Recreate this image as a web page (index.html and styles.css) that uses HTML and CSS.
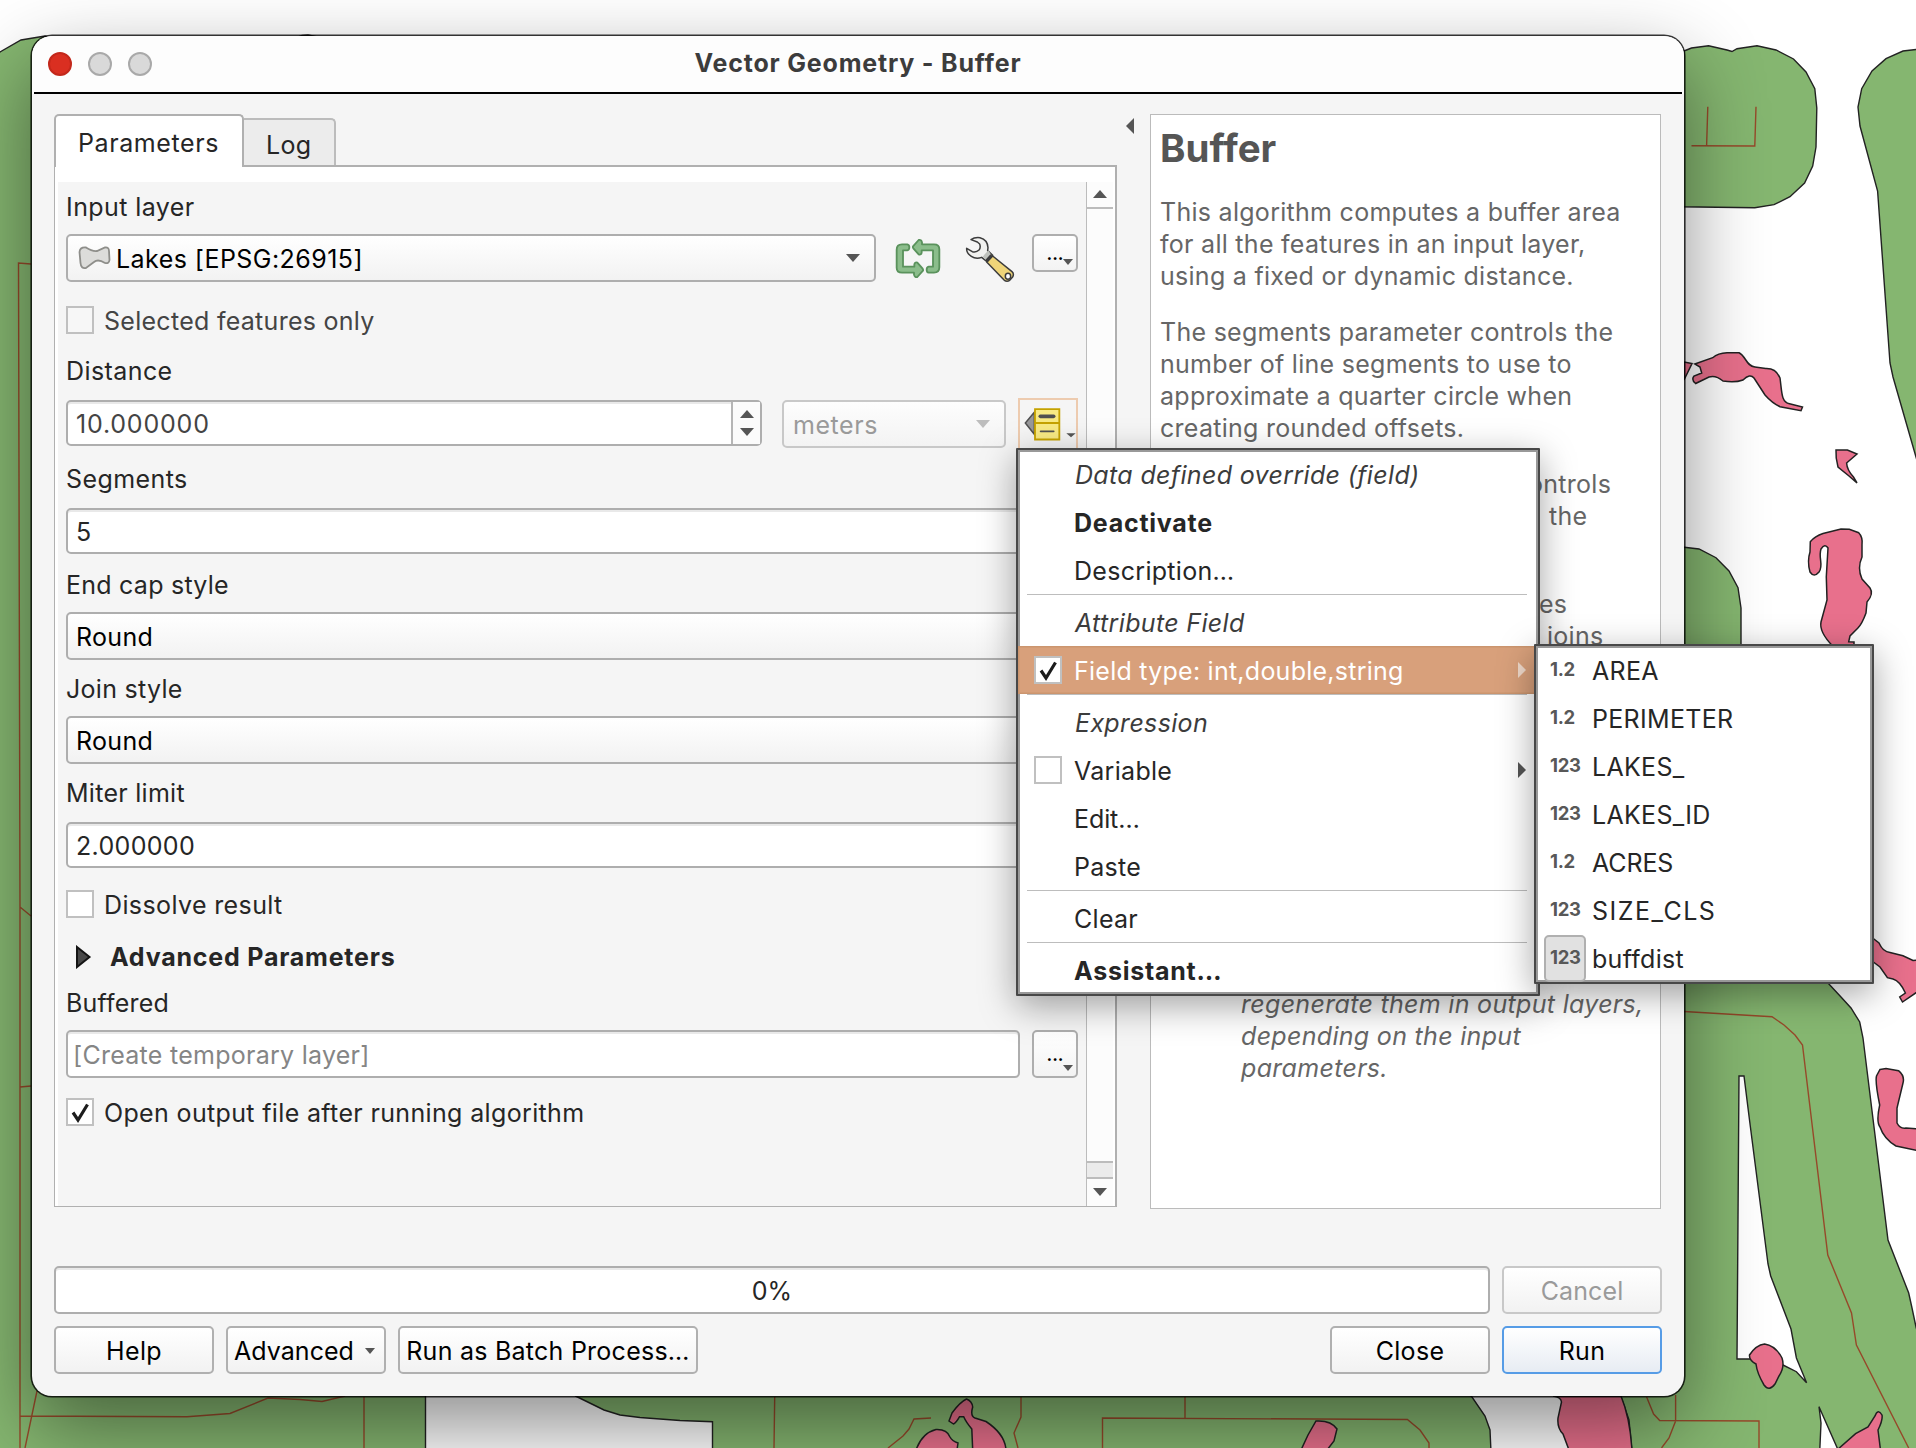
FILE: index.html
```html
<!DOCTYPE html>
<html lang="en">
<head>
<meta charset="utf-8">
<title>Vector Geometry - Buffer</title>
<link rel="stylesheet" href="styles.css">
</head>
<body>
<div class="desktop">
  <svg class="map" viewBox="0 0 1916 1448" width="1916" height="1448">
    <g class="zone">
      <path d="M-4 55 L0 52 L21 40 L45 36 L60 40 L290 40 L302 35.500 L308 35 L313 36 L425.500 60 V1452 H-4Z"/>
      <path d="M575.500 1396 L604 1410 L620 1415 L640 1417.500 L680 1420.500 L712.500 1421.700 V1452 H1491 L1490 1430 L1485 1416 L1472 1397 L1400 1340 H575Z"/>
      <path d="M1684 51 L1691.500 48 L1708.600 45.700 L1727 50 L1732 51.500 L1737 48.700 L1757 45.700 L1776 50 L1793.500 59 L1806 72 L1814.800 88.700 L1816.800 108 L1816 147 L1812.700 166 L1804.600 183 L1790 196.700 L1774 204.700 L1754.800 207.700 L1680 206.700Z"/>
      <path d="M1920 49 L1903 51 L1886 58.700 L1872 71 L1861.700 88.700 L1858 107 L1860 126 L1877.600 191 L1890 363 L1893 377 L1916 457 L1920 470Z"/>
      <path d="M1680 546.700 L1699 549 L1716 557.700 L1729 571 L1738 587.700 L1741 608 V960 L1800 962 L1828 983 L1841 997 L1851 1008 L1859.700 1022 L1863 1038 L1888 1240 L1908.700 1293 L1912 1308 L1916 1327 L1920 1340 V1452 H1839 L1819 1406.700 L1821 1423 L1819.700 1452 H1632 L1629 1420 L1621 1397 L1600 1340Z"/>
    </g>
    <path class="gap" d="M1739 1076 H1744 L1749.500 1120 L1768 1264 L1770.700 1276 L1791 1329 L1796.400 1358 L1806.600 1382.700 L1796.400 1371.700 L1783 1365 L1770 1359 H1737Z"/>
    <g class="road">
      <path d="M31 264 L18.500 263 L20 907 V1452 M20 907 L31 916 M20 1087 L31 1086 M37 1391 L25 1448 M20 1416 L187 1416.700 L230 1413.500 L268 1398 L300 1399.500 L322 1401.500 L345 1396 M364 1397 V1448"/>
      <path d="M774.700 1397 L774 1448 M888 1448 L903 1436 L909 1429 L914 1419 L931 1418 M1021 1397 V1417 L1014 1433 L1018 1448 M1102.500 1448 V1418 L1407.400 1419.500 L1420 1430 L1429 1443 V1448 M1185 1397 V1419"/>
      <path d="M1646.600 1397 L1653.600 1414 L1659.700 1420.500 L1759 1421 V1448 M1675.600 1395 V1421 L1669 1438 L1661.500 1448"/>
      <path d="M1684 1011.500 L1772 1016.700 L1784 1025 L1795 1035 L1802.500 1045 L1827.800 1255 L1851.500 1313 L1856.400 1345 L1908.700 1448"/>
      <path d="M1707.800 106.700 L1706.600 146 M1691.500 145.700 L1754.800 146 L1756 106.700"/>
    </g>
    <g class="lake">
      <path d="M1684 362 L1692 363.500 L1684 380Z"/>
      <path d="M1694.800 364 L1712.700 357.700 Q1718 353 1727 352.700 L1739 352.700 C1746 356 1746 366 1755 367 L1765.800 368.500 Q1776 368 1780 378 C1782 392 1781 402 1789.500 403.700 L1802.500 407 L1801 410.700 L1780 406.700 Q1772 403 1765 395 L1754 378 Q1750 373 1743 380 Q1735 383 1723 381 Q1716 375 1709 377 L1695.600 383.500 Q1691 380 1694 376 L1701.700 373 L1700 367Z"/>
      <path d="M1836 450 L1847.400 450 L1857 454 L1846.600 463 Q1847 470 1853.500 477 L1857 483 L1849 476 L1838 467 Q1835.500 458 1836 450Z"/>
      <path d="M1810.300 541.700 Q1815 536 1823 533.500 L1841 529 L1849.300 529.300 L1858.700 532.700 Q1863 537 1862 545 L1862 557 Q1857 568 1862 579 L1870 588 Q1874 594 1867 602 L1866 613 Q1862 624 1857.700 628.300 L1850 636 L1848.700 641.700 L1854 642 V646 H1832.700 Q1819 632 1821 622 L1827 600 L1826.300 576.700 L1828 548 Q1825 543 1821 549 C1818 558 1824 565 1819 572 Q1814 578 1810 572 Q1807 561 1810 552Z"/>
      <path d="M1870 936 L1879 943 Q1883 952 1890 952.500 L1903 955.700 L1913 960.500 L1920 960 V990 L1902.500 1002 L1899.700 997 L1905.400 993 Q1900 981 1893 979 L1887.400 977.700 L1880 967 L1868 958Z"/>
      <path d="M1880 1069.500 L1886 1068.500 L1898.500 1070.700 Q1905 1076 1903 1083 L1897 1108 V1123 Q1900 1129 1906 1128 L1920 1129 V1151 L1896 1146 Q1884 1139 1880 1127 Q1876 1122 1879.700 1105 Q1875 1082 1876.500 1076Z"/>
      <path d="M1749.500 1355 Q1756 1345 1764.600 1344 Q1776 1346 1782 1358 Q1785 1367 1779 1376 L1775 1384 Q1769 1392 1764 1385 Q1757 1373 1756 1364 Q1749 1360 1749.500 1355Z"/>
      <path d="M1837 1450 L1855.600 1433.700 L1868 1427 L1875 1416 Q1878 1408 1882 1415 Q1883 1420 1878 1430 L1880.500 1450Z"/>
      <path d="M1553 1396 Q1561 1397 1561.500 1402 L1558 1418 Q1557 1428 1563 1434 L1569 1450 H1632 Q1630 1418 1621 1396Z"/>
      <path d="M916 1450 Q922 1433 936 1429.500 Q947 1429 950 1437 Q952 1441 958 1443 L957 1450Z"/>
      <path d="M949 1421 L952 1413 Q960 1402 966.500 1399 Q972 1401 972.700 1407 Q970 1416 975 1418 L986 1421.500 Q1005 1434 1006 1450 H972.700 L971.800 1429 Q966 1422 963.700 1416.700 L959.600 1416.700 Q956 1423 953.500 1424Z"/>
      <path d="M1301 1450 L1308 1435 L1316 1421 Q1331 1420 1337 1429 L1334 1441 L1327 1450Z"/>
    </g>
  </svg>

  <main class="window">
    <header class="titlebar">
      <div class="lights"><i class="close"></i><i></i><i></i></div>
      <h1>Vector Geometry - Buffer</h1>
    </header>

    <div class="content">
      <section class="left">
        <nav class="tabs"><span class="tab active">Parameters</span><span class="tab">Log</span></nav>
        <div class="panel">
          <form class="form">
            <label class="first">Input layer</label>
            <div class="row layer">
              <div class="combo grow">
                <svg class="poly" width="34" height="26" viewBox="77 244 34 26"><path d="M79.500 251 Q80 246 86 246.500 Q92 250.500 97 250 L105 246.500 Q109 246 109 250 L109.500 259 Q109 263 105 262 Q98 257.500 94 261 L86 267 Q81 268 80.500 262Z" fill="#dcdcda" stroke="#8e8e8a" stroke-width="1.800"/></svg>
                <span>Lakes [EPSG:26915]</span><i class="down"></i>
              </div>
              <svg class="iterate" width="46" height="41" viewBox="45 55 138 123"><g fill="#8bbd8b" stroke="#5a925c" stroke-width="5.500" stroke-linejoin="round"><path id="loop" d="M82 74 H66 Q50 74 50 90 V144 Q50 159 66 159 H102 V165 Q104 174 112 172 L129 153 Q130 150 128 147 L112 129 Q104 126 103 135 V141 H69 V92 H82 Q88 91 88 83 Q88 75 82 74Z"/><use href="#loop" transform="rotate(180 114 116.500)"/></g></svg>
              <svg class="wrench" width="50" height="48" viewBox="255 49 150 144"><g stroke="#3c3c3c" stroke-width="4.500" stroke-linejoin="round"><path d="M273 60 Q284 52 300 54 Q323 60 324 84 L323 93 L338 107 L320 125 L305 113 Q288 119 274 110 Q259 100 260 86 L277 96 Q289 99 297 91 Q303 84 299 73 L292 67Z" fill="#f1f1ef"/><path d="M325 92 L334 106 L318 121 L308 111Z" fill="#bfc2bd" stroke="none"/><path d="M338 109 L396 156 Q403 162 398 172 L389 182 Q381 187 373 182 L320 127Z" fill="#efd579"/><path d="M335 107 L319 125" stroke-width="10"/><ellipse cx="384" cy="170" rx="8" ry="9" fill="#fff"/></g></svg>
              <button type="button" class="more short">...<i class="down small"></i></button>
            </div>
            <div class="check c1 dim"><i class="box off"></i>Selected features only</div>
            <label class="l-dist">Distance</label>
            <div class="row dist">
              <div class="spin grow dim"><span class="wide">10.000000</span><b><i class="up"></i><i class="down"></i></b></div>
              <div class="combo units"><span>meters</span><i class="down"></i></div>
              <div class="override"><svg width="52" height="36" viewBox="432 560 156 108"><path d="M463 576 L436 608 L463 642Z" fill="#98989a" stroke="#505050" stroke-width="4.500"/><path d="M465 566.500 H538 V657.500 H465Z M465 608 H538" fill="#f8ea84" stroke="#c5a200" stroke-width="5.500"/><path d="M481 588 H521" stroke="#505050" stroke-width="11" stroke-linecap="round"/><path d="M482 633 H521" stroke="#505050" stroke-width="5.500" stroke-linecap="round"/><path d="M559 639 H587 L573 651Z" fill="#555"/></svg></div>
            </div>
            <label class="l-seg">Segments</label>
            <div class="spin">5</div>
            <label class="l-cap">End cap style</label>
            <div class="combo">Round</div>
            <label class="l-join">Join style</label>
            <div class="combo">Round</div>
            <label class="l-join">Miter limit</label>
            <div class="spin">2.000000</div>
            <div class="check c2"><i class="box"></i>Dissolve result</div>
            <div class="advanced"><svg width="18" height="24" viewBox="0 0 18 24"><path d="M2 2 L14.500 12 L2 22Z" fill="#484848" stroke="#141414" stroke-width="2"/></svg>Advanced Parameters</div>
            <label class="l-buf">Buffered</label>
            <div class="row out"><div class="field grow">[Create temporary layer]</div><button type="button" class="more">...<i class="down small"></i></button></div>
            <div class="check c3"><i class="box"><svg viewBox="0 0 24 24" width="24" height="24"><path d="M5 12.500 L10 20 L19.500 4.500"/></svg></i>Open output file after running algorithm</div>
          </form>
          <div class="scroll"><b class="sb-up"><i class="up"></i></b><b class="thumb"></b><b class="sb-down"><i class="down"></i></b></div>
        </div>
      </section>
      <div class="fold"><i></i></div>
      <aside class="help">
        <h2>Buffer</h2>
        <p>This algorithm computes a buffer area<br>for all the features in an input layer,<br>using a fixed or dynamic distance.</p>
        <p>The segments parameter controls the<br>number of line segments to use to<br>approximate a quarter circle when<br>creating rounded offsets.</p>
        <p class="caps"><span>ontrols</span><span>the</span></p>
        <p class="joins"><span>es</span><span>joins</span></p>
        <p class="note">regenerate them in output layers,<br>depending on the input<br>parameters.</p>
      </aside>
    </div>

    <div class="row progress"><div class="bar">0%</div><button class="btn off">Cancel</button></div>
    <footer class="row actions">
      <button class="btn">Help</button>
      <button class="btn adv">Advanced<i class="down small"></i></button>
      <button class="btn batch">Run as Batch Process…</button>
      <span class="grow"></span>
      <button class="btn">Close</button>
      <button class="btn run">Run</button>
    </footer>
  </main>

  <div class="menu main">
    <div class="item head">Data defined override (field)</div>
    <div class="item bold">Deactivate</div>
    <div class="item">Description…</div>
    <hr>
    <div class="item head">Attribute Field</div>
    <div class="item on"><i class="box"><svg viewBox="0 0 24 24" width="24" height="24"><path d="M5 12.500 L10 20 L19.500 4.500"/></svg></i>Field type: int,double,string<i class="right"></i></div>
    <hr>
    <div class="item head">Expression</div>
    <div class="item"><i class="box"></i>Variable<i class="right"></i></div>
    <div class="item tight">Edit…</div>
    <div class="item">Paste</div>
    <hr>
    <div class="item">Clear</div>
    <hr>
    <div class="item bold">Assistant…</div>
  </div>

  <div class="menu fields">
    <div class="item"><b>1.2</b>AREA</div>
    <div class="item"><b>1.2</b>PERIMETER</div>
    <div class="item"><b>123</b>LAKES_</div>
    <div class="item"><b>123</b>LAKES_ID</div>
    <div class="item tight"><b>1.2</b>ACRES</div>
    <div class="item loose"><b>123</b>SIZE_CLS</div>
    <div class="item"><b class="picked">123</b>buffdist</div>
  </div>
</div>
</body>
</html>
```
FILE: styles.css
```css
* { box-sizing: border-box; }
body { margin: 0; background: #fff; font: 25px/32px Inter, "Liberation Sans", sans-serif; letter-spacing: .32px; color: #262626; }
i, b { font-style: normal; display: block; flex: none; }
h1, h2, p { margin: 0; }
button { font: inherit; letter-spacing: inherit; color: #000; padding: 0; }

.desktop { position: relative; width: 1916px; height: 1448px; overflow: hidden; }
.map { display: block; }
.zone path { fill: #85b670; stroke: #222; stroke-width: 1.4; }
.gap { fill: #fff; stroke: #222; stroke-width: 1.4; }
.road path { fill: none; stroke: #96492a; stroke-width: 1.4; }
.lake path { fill: #e8708c; stroke: #222; stroke-width: 1.5; }

.window { position: absolute; left: 32px; top: 36px; width: 1652px; height: 1360px; background: #f5f5f5; border-radius: 20px; box-shadow: 0 0 0 1.6px rgba(0,0,0,.78), 0 30px 80px rgba(0,0,0,.46); }
.titlebar { display: grid; grid-template-columns: 1fr auto 1fr; align-items: center; height: 58px; padding: 0 16px 2px; background: linear-gradient(#000, #000) 2px 100% / 1648px 2px no-repeat #fdfdfd; border-radius: 20px 20px 0 0; }
.lights { display: flex; gap: 16px; }
.lights i { width: 24px; height: 24px; border-radius: 50%; background: #d9d9d9; border: 2px solid #a9a9a9; }
.lights .close { background: #da2f21; border-color: #c3281b; }
h1 { font-size: 25px; line-height: 32px; font-weight: 700; letter-spacing: .8px; color: #3c3c3c; padding-bottom: 3px; }

.content { display: flex; height: 1095px; margin: 20px 22px 0; }
.left { width: 1063px; height: 1093px; display: flex; flex-direction: column; }
.tabs { display: flex; align-items: flex-end; height: 51px; }
.tab { width: 92px; height: 47px; padding: 9px 0 0 22px; background: #ececec; border: 2px solid #bcbcbc; border-width: 2px 2px 0 0; border-radius: 0 5px 0 0; }
.tab.active { position: relative; width: 190px; height: 53px; margin-bottom: -2px; padding: 11px 0 0 22px; letter-spacing: .6px; background: #fff; border: 2px solid #b0b0b0; border-bottom: 0; border-radius: 5px 5px 0 0; }
.panel { flex: 1; display: flex; background: #fff; border: 2px solid #b0b0b0; border-left-width: 1px; border-bottom-width: 1px; padding: 15px 2px 0 3px; }
.form { flex: 1; display: flex; flex-direction: column; background: #f5f5f5; padding: 0 8px; }
.form label { display: block; height: 32px; letter-spacing: .42px; }
.form label.first { margin: 9px 0 11px; }
.form label.l-dist { margin: 21px 0 13px; }
.form label.l-seg { margin: 17px 0 13px; }
.form label.l-cap { margin: 15px 0 11px; letter-spacing: .24px; }
.form label.l-join { margin: 13px 0 11px; letter-spacing: .28px; }
.form label.l-join + .spin { margin-top: 2px; }
.form label.l-buf { margin: 15px 0 11px; letter-spacing: .2px; }
.row { display: flex; align-items: flex-start; }
.grow { flex: 1; }
.layer { height: 48px; }
.dist { height: 46px; }
.combo, .spin, .field, .bar { display: flex; align-items: center; border: 2px solid #aeaeae; border-radius: 5px; padding: 1px 0 0 8px; }
.combo { height: 48px; background: linear-gradient(#fff, #f2f2f2); color: #000; }
.layer .combo { letter-spacing: .45px; padding-left: 9px; }
.combo .down { margin: -1px 14px 0 auto; }
.spin { height: 46px; background: #fff; box-shadow: inset 0 2px #e9e9e9; }
.spin b { height: 42px; margin: -1px 0 0 auto; display: flex; flex-direction: column; align-items: center; justify-content: center; gap: 10px; width: 29px; border-left: 2px solid #b5b5b5; background: #fbfbfb; }
.dim { color: #444; letter-spacing: .28px; }
.wide { letter-spacing: .8px; }
.units { width: 224px; margin-left: 20px; padding-left: 9px; border-color: #c8c8c8; background: linear-gradient(#fdfdfd, #f3f3f3); color: #9a9a9a; letter-spacing: .55px; }
.combo.units .down { border-top-color: #bdbdbd; }
.override { width: 60px; height: 56px; margin: -2px 0 0 12px; border: 2px solid #edcbaf; padding: 7px 0 0 4px; line-height: 0; }
.poly { margin: -2px 5px 0 0; }
.iterate { margin: 4px 0 0 19px; }
.wrench { margin: 2px 17px 0 24px; }
.more { position: relative; width: 46px; height: 48px; margin-left: 12px; border: 2px solid #aeaeae; border-radius: 5px; background: linear-gradient(#fff, #f3f3f3); font-size: 18px; line-height: 44px; font-weight: 600; letter-spacing: 0; padding-top: 1px; }
.more.short { height: 38px; margin-left: 0; line-height: 34px; }
.more .small { position: absolute; right: 3px; bottom: 5px; }
.down { width: 0; border: 7.5px solid transparent; border-top: 8px solid #555; border-bottom: 0; }
.up { width: 0; border: 7.5px solid transparent; border-bottom: 8px solid #555; border-top: 0; }
.small { border-width: 6px 5.5px 0; }

.check { display: flex; align-items: center; gap: 10px; height: 28px; padding-top: 1px; }
.c1 { margin-top: 24px; }
.c2 { margin-top: 22px; letter-spacing: .38px; }
.c3 { margin-top: 20px; letter-spacing: .35px; }
.box { width: 28px; height: 28px; border: 2px solid #c0c0c0; background: #fff; }
.check .box { margin-top: -1px; }
.box.off { background: #f7f7f7; }
.box svg { display: block; }
.box path { fill: none; stroke: #1c1c1c; stroke-width: 3.2; }
.advanced { display: flex; align-items: center; gap: 17px; height: 32px; margin-top: 22px; padding: 1px 0 0 9px; font-weight: 700; letter-spacing: .78px; }
.field { height: 48px; padding-left: 5px; background: #fff; box-shadow: inset 0 2px #e9e9e9; color: #858585; letter-spacing: .27px; }

.scroll { width: 27px; display: flex; flex-direction: column; background: #fcfcfc; border-left: 1px solid #bcbcbc; }
.scroll b { display: flex; justify-content: center; align-items: center; }
.sb-up { height: 27px; padding-bottom: 1px; border-bottom: 2px solid #bcbcbc; }
.thumb { height: 18px; margin-top: auto; background: #ebebeb; border: solid #bcbcbc; border-width: 2px 0; }
.sb-down { height: 27px; padding-bottom: 1px; }

.fold { width: 33px; padding: 4px 0 0 9px; }
.fold i { width: 0; border: 8px solid transparent; border-right-color: #555; border-left: 0; }
.help { flex: 1; background: #fff; border: 1px solid #bbb; margin-right: 1px; padding: 5px 0 0 9px; color: #666; letter-spacing: .28px; white-space: nowrap; }
h2 { font-size: 38.500px; line-height: 56px; letter-spacing: 0; color: #555; font-weight: 700; }
.help p { margin-bottom: 24px; }
.help h2 + p { margin-top: 20px; }
.help span { display: block; }
.help .caps { height: 96px; padding-left: 368px; }
.caps span + span { padding-left: 21px; }
.help .joins { height: 64px; margin-bottom: 336px; padding-left: 379px; }
.joins span + span { padding-left: 8px; }
.help .note { font-style: italic; padding-left: 81px; letter-spacing: .31px; }

.progress { margin: 57px 22px 0; gap: 12px; }
.bar { flex: 1; height: 48px; justify-content: center; padding: 1px 0 0; background: #fff; box-shadow: inset 0 2px #e9e9e9; letter-spacing: 0; }
.btn { width: 160px; height: 48px; padding-top: 1px; border: 2px solid #b0b0b0; border-radius: 5px; background: linear-gradient(#fff, #f2f2f2); }
.btn.off { color: #9a9a9a; border-color: #c8c8c8; letter-spacing: .1px; }
.actions { margin: 12px 22px 0; gap: 12px; }
.actions .grow { margin: 0 -12px; }
.btn.adv { display: flex; align-items: center; gap: 11px; padding-left: 6px; letter-spacing: .05px; }
.btn.batch { width: 300px; letter-spacing: .25px; }
.btn.run { border-color: #569ce6; background: linear-gradient(#fff, #e7ecf3); }

.menu { position: absolute; background: #fff; border: 2px solid #484848; box-shadow: inset 0 0 0 2px #999, 0 10px 36px rgba(0,0,0,.36); border-radius: 1px; }
.menu hr { margin: 0 11px 0 9px; height: 4px; border: 0; border-top: 1px solid #bdbdbd; }
.item { display: flex; align-items: center; height: 48px; padding-top: 1px; letter-spacing: .3px; }
.main { left: 1016px; top: 448px; width: 524px; height: 548px; }
.main .item { padding-left: 56px; }
.main .item.head { padding-left: 57px; }
.main .box { margin: -1px 12px 0 -40px; }
.item.head { font-style: italic; color: #3c3c3c; letter-spacing: .34px; }
.item.bold { font-weight: 700; letter-spacing: .75px; }
.item.tight { letter-spacing: -.1px; }
.item.loose { letter-spacing: 1.5px; }
.item.on { background: #d8a07b; box-shadow: inset 0 0 0 1.5px #cb956f; color: #fff; letter-spacing: .25px; }
.right { width: 0; border: 8px solid transparent; border-left-color: #555; border-right: 0; margin: -1px 12px 0 auto; }
.on .right { border-left-color: #efd9ca; }
.fields { left: 1534px; top: 644px; width: 340px; height: 340px; }
.fields b { width: 42px; height: 47px; margin: -1px 6px 0 8px; padding: 6px 0 0 6px; font-size: 18.500px; font-weight: 700; letter-spacing: -.3px; color: #585858; border: 0 solid #b0b0b0; }
.fields .picked { padding: 4px 0 0 4px; background: #e1e1e1; border-width: 2px; border-radius: 5px; }
```
